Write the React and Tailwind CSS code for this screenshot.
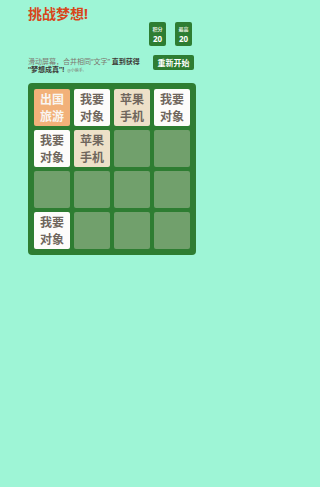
const cells = [
  "出国旅游", "我要对象", "苹果手机", "我要对象",
  "我要对象", "苹果手机", "", "",
  "", "", "", "",
  "我要对象", "", "", "",
];

const tileStyle = {
  "出国旅游": "bg-[#f2b179] text-[#f9f6f2]",
  "苹果手机": "bg-[#ede0c8] text-[#6f665d]",
  "我要对象": "bg-[#fdfcfa] text-[#6f665d]",
};

function Tile({ word }) {
  if (!word) {
    return <div className="h-[37px] rounded-[2px] bg-[#71a06c]" />;
  }
  return (
    <div className={"h-[37px] rounded-[2px] flex flex-col items-center justify-center text-[12px] leading-[17px] font-bold " + tileStyle[word]}>
      <span>{word.slice(0, 2)}</span>
      <span>{word.slice(2)}</span>
    </div>
  );
}

function ScoreBox({ label, value }) {
  return (
    <div className="w-[17px] h-[24px] rounded-[2px] bg-[#2e7d32] flex flex-col items-center pt-[4px]">
      <span className="text-[5px] leading-[7px] font-bold text-[#e6efe0]">{label}</span>
      <span className="text-[8px] leading-[11px] font-bold text-white">{value}</span>
    </div>
  );
}

export default function App() {
  return (
    <div className="min-h-screen bg-[#9ef5d6] font-['Noto_Sans','Noto_Sans_CJK_SC',sans-serif]">
      <div className="w-[168px] ml-[28px] pt-[5px]">
        <h1 className="text-[14px] leading-[17px] font-bold text-[#d8461b]">挑战梦想!</h1>

        <div className="flex justify-end gap-[9px] pr-[4px]">
          <ScoreBox label="积分" value="20" />
          <ScoreBox label="最高" value="20" />
        </div>

        <div className="flex items-start justify-between h-[18px] mt-[9px]">
          <p className="w-[118px] pt-[2.5px] text-[7px] leading-[8px] text-[#7d766f]">
            滑动屏幕，合并相同“文字”
            <b className="text-[#3d3a36]"> 直到获得 “梦想成真”!</b>
            <span className="text-[4px] ml-[3px]">@小萌手:</span>
          </p>
          <button className="w-[41px] h-[15px] mr-[2px] rounded-[2px] bg-[#2e7d32] text-white text-[8px] leading-[15px] font-bold">
            重新开始
          </button>
        </div>

        <div className="mt-[10px] w-[168px] rounded-[4px] bg-[#2e7d32] p-[6px] grid grid-cols-4 gap-[4px]">
          {cells.map((w, i) => (
            <Tile key={i} word={w} />
          ))}
        </div>
      </div>
    </div>
  );
}
